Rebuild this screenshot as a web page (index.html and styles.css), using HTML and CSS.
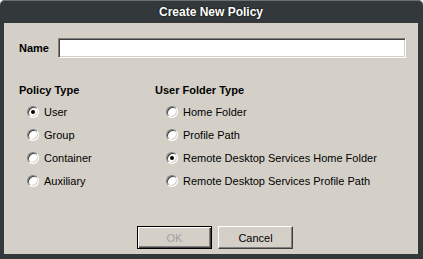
FILE: index.html
```html
<!DOCTYPE html>
<html>
<head>
<meta charset="utf-8">
<link rel="stylesheet" href="styles.css">
</head>
<body>
<div class="window">
  <div class="titlebar">Create New Policy</div>
  <div class="content">
    <div class="name-row">
      <span class="label">Name</span>
      <div class="textbox"></div>
    </div>
    <div class="types">
      <div class="group policy">
        <div class="heading">Policy Type</div>
        <div class="option"><span class="radio checked"></span><span>User</span></div>
        <div class="option"><span class="radio"></span><span>Group</span></div>
        <div class="option"><span class="radio"></span><span>Container</span></div>
        <div class="option"><span class="radio"></span><span>Auxiliary</span></div>
      </div>
      <div class="group folder">
        <div class="heading">User Folder Type</div>
        <div class="option"><span class="radio"></span><span>Home Folder</span></div>
        <div class="option"><span class="radio"></span><span>Profile Path</span></div>
        <div class="option"><span class="radio checked"></span><span>Remote Desktop Services Home Folder</span></div>
        <div class="option"><span class="radio"></span><span>Remote Desktop Services Profile Path</span></div>
      </div>
    </div>
    <div class="buttons">
      <div class="btn default disabled">OK</div>
      <div class="btn">Cancel</div>
    </div>
  </div>
</div>
</body>
</html>
```

FILE: styles.css
```css
html, body {
  margin: 0;
  padding: 0;
  background: #ffffff;
}
body {
  width: 423px;
  height: 259px;
  overflow: hidden;
  font-family: "Liberation Sans", Arial, sans-serif;
  font-size: 11px;
  color: #000;
}
.window {
  width: 423px;
  height: 259px;
  box-sizing: border-box;
  background: #33383b;
  border-radius: 5px 5px 0 0;
  display: flex;
  flex-direction: column;
  padding: 0 5px 5px 4px;
  box-shadow: inset 0 1px 0 #6a6f72;
}
.titlebar {
  height: 23px;
  line-height: 24px;
  flex: none;
  text-align: center;
  color: #ffffff;
  font-weight: bold;
  font-size: 12px;
  text-shadow: 0 0 2px #000;
}
.content {
  flex: 1;
  background: #d4d0c8;
  display: flex;
  flex-direction: column;
  padding: 15px 12px 5px 15px;
}
.name-row {
  display: flex;
  align-items: center;
  gap: 7px;
}
.label {
  font-weight: bold;
  width: 32px;
}
.textbox {
  width: 348px;
  height: 20px;
  box-sizing: border-box;
  background: #fff;
  border: 1px solid;
  border-color: #808080 #ffffff #ffffff #808080;
  box-shadow: inset 1px 1px 0 #404040, inset -1px -1px 0 #d4d0c8;
}
.types {
  display: flex;
  margin-top: 25px;
}
.group {
  display: flex;
  flex-direction: column;
}
.policy {
  width: 136px;
}
.heading {
  font-weight: bold;
  line-height: 14px;
  margin-bottom: 3px;
}
.option {
  display: flex;
  align-items: center;
  height: 23px;
  padding-left: 8px;
  gap: 5px;
}
.folder .option {
  padding-left: 11px;
}
.radio {
  width: 12px;
  height: 12px;
  box-sizing: border-box;
  border-radius: 50%;
  background: #fff;
  border: 1px solid;
  border-color: #808080 #ffffff #ffffff #808080;
  box-shadow: inset 1px 1px 0 #404040, inset -1px -1px 0 #d4d0c8;
  display: flex;
  align-items: center;
  justify-content: center;
  flex: none;
}
.radio.checked::after {
  content: "";
  width: 4px;
  height: 4px;
  border-radius: 50%;
  background: #000;
}
.buttons {
  margin-top: auto;
  display: flex;
  gap: 6px;
  padding-left: 118px;
}
.btn {
  width: 75px;
  height: 23px;
  box-sizing: border-box;
  border: 1px solid;
  border-color: #ffffff #404040 #404040 #ffffff;
  box-shadow: inset -1px -1px 0 #808080;
  display: flex;
  align-items: center;
  justify-content: center;
}
.btn.default {
  border: 1px solid #000;
  box-shadow: inset 1px 1px 0 #ffffff, inset -1px -1px 0 #404040, inset -2px -2px 0 #808080;
}
.btn.disabled {
  color: #a0a0a0;
}
```
